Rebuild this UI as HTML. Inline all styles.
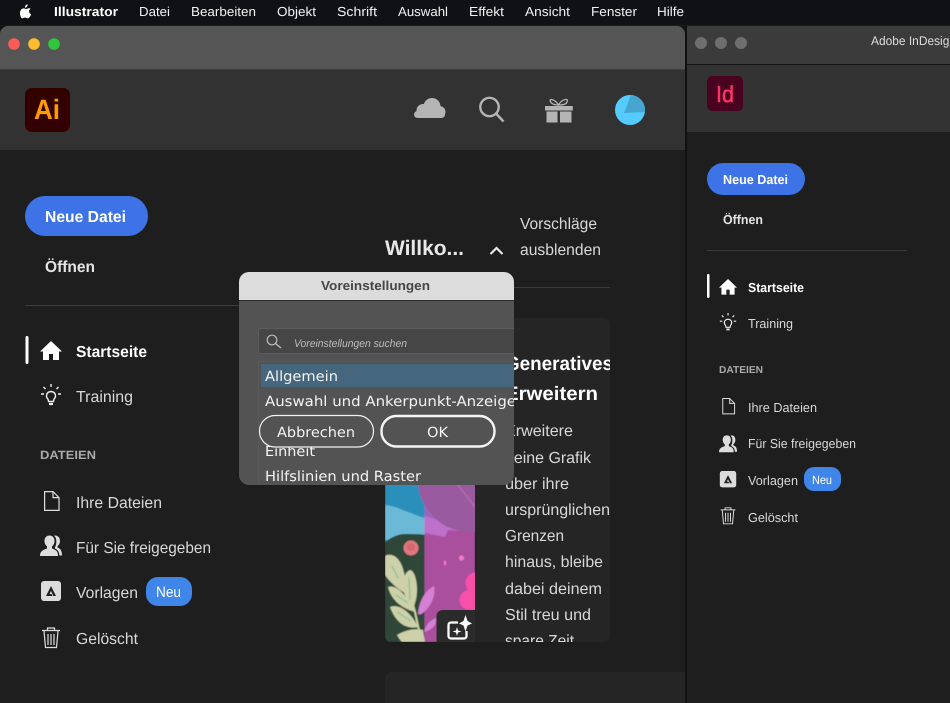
<!DOCTYPE html>
<html lang="de"><head><meta charset="utf-8"><title>Illustrator</title>
<style>
html,body{margin:0;padding:0;background:#1e1e1e;width:950px;height:703px;overflow:hidden}
svg{display:block}
text{font-family:"Liberation Sans",sans-serif;fill:#d8d8d8;text-rendering:geometricPrecision}
.m{font-size:13px;fill:#f2f2f2}
.b{font-weight:700;fill:#fff}
.n{font-size:16px}
.s{font-size:13px}
.d{font-family:"DejaVu Sans",sans-serif;font-size:14px;fill:#f4f4f4}
</style></head><body>
<svg width="950" height="703" viewBox="0 0 950 703" xmlns="http://www.w3.org/2000/svg">
<defs>
<filter id="sf" x="0" y="0" width="100%" height="100%"><feGaussianBlur stdDeviation=".4"/></filter>
<clipPath id="aw"><path d="M0 34a8 8 0 0 1 8-8H677a8 8 0 0 1 8 8V703H0Z"/></clipPath>
<clipPath id="cd"><rect x="385" y="318" width="225" height="324" rx="6"/></clipPath>
<clipPath id="im"><path d="M385 480H475V642H391a6 6 0 0 1-6-6Z"/></clipPath>
<clipPath id="dl"><rect x="239" y="272" width="275" height="213" rx="10"/></clipPath>
<g id="i-home"><path d="M11 0L0 10.500H3V19H9V13H13V19H19V10.500H22Z" fill="#fff"/></g>
<g id="i-bulb" fill="none" stroke="#eee" stroke-width="1.400"><path d="M7.500 14.500C5.800 12.500 6 8 11 7.500C16 8 16.200 12.500 14.500 14.500C13.600 15.500 13.600 16.500 13.500 17.500H8.500C8.400 16.500 8.400 15.500 7.500 14.500Z"/><path d="M9 20H13" stroke-width="2.200"/><path d="M11 0V3M3.500 3L5.500 5M18.500 3L16.500 5M1 10H4M18 10H21"/></g>
<g id="i-file" fill="none" stroke="#ddd" stroke-width="1.200"><path d="M4.600 .6H13L19 6.600V19.400H4.600Z"/><path d="M13 .6V6.600H19"/></g>
<g id="i-ppl" fill="#ddd"><path d="M0 21C0 16 3 15 7 13.500V11.500C5.200 10 4.500 8 4.500 6C4.500 2.500 6.500 .5 9.500 .5S14.500 2.500 14.500 6C14.500 8 13.800 10 12 11.500V13.500C16 15 18 16 18 21Z"/><path d="M15 .5C18 .5 20 2.500 20 6C20 8 19.200 10 17.500 11.200V12.500C20 13.500 22 15 22 20.500H19.500C19.200 16 17 14.500 15 13.500V12C16.200 10.500 16.300 8 16.300 6C16.300 4 15.700 2 14 .8Z"/></g>
<g id="i-tpl"><rect x="1" y="0" width="20" height="20" rx="3" fill="#dcdcdc"/><path d="M11 5L16 15H13.300L11 10L9.500 13H11.500L12.500 15H6Z" fill="#222"/></g>
<g id="i-trash" fill="none" stroke="#ddd" stroke-width="1.200"><path d="M2 3.500H20"/><path d="M7.500 3.500V1H14.500V3.500"/><path d="M4 4L5.500 20.500H16.500L18 4"/><path d="M8 7V18M11 7V18M14 7V18"/></g>
</defs>

<rect width="950" height="703" fill="#1e1e1e"/>
<rect x="0" y="26" width="950" height="677" fill="#111"/>

<!-- InDesign window -->
<path d="M687 26H950V703H687Z" fill="#1e1e1e"/>
<rect x="687" y="26" width="263" height="38" fill="#3b3b3b"/>
<rect x="687" y="64" width="263" height="1" fill="#161616"/>
<rect x="687" y="65" width="263" height="67" fill="#333"/>
<circle cx="701" cy="43" r="6" fill="#6e6e6e"/><circle cx="721" cy="43" r="6" fill="#6e6e6e"/><circle cx="741" cy="43" r="6" fill="#6e6e6e"/>
<text x="871" y="45" style="font-size:12.500px;fill:#ddd" textLength="85" lengthAdjust="spacingAndGlyphs">Adobe InDesign</text>
<rect x="707" y="76" width="36" height="35" rx="5" fill="#49021f"/>
<text x="716" y="102" style="font-size:23px;fill:#ff3366;stroke:#ff3366;stroke-width:.5px" textLength="18" lengthAdjust="spacingAndGlyphs">Id</text>
<rect x="707" y="163" width="98" height="32" rx="16" fill="#3d73e6"/>
<text x="723" y="184" class="b s" textLength="65" lengthAdjust="spacingAndGlyphs">Neue Datei</text>
<text x="723" y="224" class="b s" style="fill:#e4e4e4" textLength="40" lengthAdjust="spacingAndGlyphs">Öffnen</text>
<rect x="707" y="250" width="200" height="1" fill="#3a3a3a"/>
<rect x="707" y="274" width="2.500" height="24" rx="1.200" fill="#fff"/>
<use href="#i-home" transform="translate(719 279) scale(.82)"/>
<text x="748" y="292" class="b s" textLength="56" lengthAdjust="spacingAndGlyphs">Startseite</text>
<use href="#i-bulb" transform="translate(719 313) scale(.82)"/>
<text x="748" y="328" class="s" textLength="45" lengthAdjust="spacingAndGlyphs">Training</text>
<text x="719" y="373" class="b" style="font-size:10px;fill:#aaa" textLength="44" lengthAdjust="spacingAndGlyphs">DATEIEN</text>
<use href="#i-file" transform="translate(719 398) scale(.82)"/>
<text x="748" y="412" class="s" textLength="69" lengthAdjust="spacingAndGlyphs">Ihre Dateien</text>
<use href="#i-ppl" transform="translate(719 435) scale(.82)"/>
<text x="748" y="448" class="s" textLength="108" lengthAdjust="spacingAndGlyphs">Für Sie freigegeben</text>
<use href="#i-tpl" transform="translate(719 471) scale(.82)"/>
<text x="748" y="485" class="s" textLength="50" lengthAdjust="spacingAndGlyphs">Vorlagen</text>
<rect x="804" y="467" width="37" height="24" rx="10" fill="#3f86e8"/>
<text x="812" y="484" class="s" style="fill:#fff;font-size:12px" textLength="20" lengthAdjust="spacingAndGlyphs">Neu</text>
<use href="#i-trash" transform="translate(719 507) scale(.82)"/>
<text x="748" y="522" class="s" textLength="50" lengthAdjust="spacingAndGlyphs">Gelöscht</text>

<!-- Illustrator window -->
<g clip-path="url(#aw)">
<rect x="0" y="26" width="685" height="677" fill="#1e1e1e"/>
<rect x="0" y="26" width="685" height="43" fill="#555"/>
<rect x="0" y="69" width="685" height="1" fill="#3e3e3e"/>
<rect x="0" y="70" width="685" height="80" fill="#323232"/>
<circle cx="14" cy="44" r="5.800" fill="#fc5b57"/><circle cx="34" cy="44" r="5.800" fill="#fcbc2e"/><circle cx="54" cy="44" r="5.800" fill="#2fc63e"/>
<rect x="25" y="88" width="45" height="44" rx="7" fill="#330000"/>
<text x="34" y="119" class="b" style="font-size:28px;fill:#ff9a00" textLength="26" lengthAdjust="spacingAndGlyphs">Ai</text>
<!-- cloud -->
<g fill="#b4b4b4"><rect x="414" y="111" width="31" height="7" rx="3.500"/><circle cx="432" cy="106.500" r="8.500"/><circle cx="423" cy="110.500" r="6.500"/><circle cx="439.500" cy="112" r="6"/></g>
<!-- search -->
<circle cx="489.500" cy="107" r="9.200" fill="none" stroke="#b4b4b4" stroke-width="2.400"/>
<path d="M496.500 114L503.500 121.500" stroke="#b4b4b4" stroke-width="2.400" fill="none"/>
<!-- gift -->
<path d="M545 106H572.800V110.500H545ZM546.500 111.500H557.500V122.500H546.500ZM560 111.500H571.500V122.500H560Z" fill="#b4b4b4"/>
<path d="M558.500 105C555 99 547.500 97.500 551 102.500C552.500 104.500 555 105 558.500 105C563 105 566 104.500 567 102C569 97.500 562 99 558.500 105Z" fill="none" stroke="#b4b4b4" stroke-width="1.300"/>
<!-- avatar -->
<circle cx="630" cy="110" r="15" fill="#55ccff"/>
<path d="M624 113L631 95A15 15 0 0 1 644.900 112Z" fill="#46a6cf"/>

<!-- left sidebar -->
<rect x="25" y="196" width="123" height="40" rx="20" fill="#3d73e6"/>
<text x="45" y="222" class="b n" textLength="81" lengthAdjust="spacingAndGlyphs">Neue Datei</text>
<text x="45" y="272" class="b n" style="fill:#e4e4e4" textLength="50" lengthAdjust="spacingAndGlyphs">Öffnen</text>
<rect x="25" y="305" width="225" height="1" fill="#3a3a3a"/>
<rect x="25.500" y="336" width="3" height="28" rx="1.500" fill="#fff"/>
<use href="#i-home" transform="translate(40 341)"/>
<text x="76" y="357" class="b n" textLength="71" lengthAdjust="spacingAndGlyphs">Startseite</text>
<use href="#i-bulb" transform="translate(40 384)"/>
<text x="76" y="402" class="n" textLength="57" lengthAdjust="spacingAndGlyphs">Training</text>
<text x="40" y="459" class="b" style="font-size:12px;fill:#aaa" textLength="56" lengthAdjust="spacingAndGlyphs">DATEIEN</text>
<use href="#i-file" transform="translate(40 491)"/>
<text x="76" y="508" class="n" textLength="86" lengthAdjust="spacingAndGlyphs">Ihre Dateien</text>
<use href="#i-ppl" transform="translate(40 535)"/>
<text x="76" y="553" class="n" textLength="135" lengthAdjust="spacingAndGlyphs">Für Sie freigegeben</text>
<use href="#i-tpl" transform="translate(40 581)"/>
<text x="76" y="598" class="n" textLength="62" lengthAdjust="spacingAndGlyphs">Vorlagen</text>
<rect x="146" y="577" width="46" height="29" rx="12" fill="#3f86e8"/>
<text x="156" y="597" class="n" style="fill:#fff;font-size:15px" textLength="25" lengthAdjust="spacingAndGlyphs">Neu</text>
<use href="#i-trash" transform="translate(40 627)"/>
<text x="76" y="644" class="n" textLength="62" lengthAdjust="spacingAndGlyphs">Gelöscht</text>

<!-- main content -->
<text x="385" y="255" class="b" style="font-size:21px;fill:#e8e8e8" textLength="79" lengthAdjust="spacingAndGlyphs">Willko...</text>
<path d="M490.500 254L496.500 248L502.500 254" fill="none" stroke="#e8e8e8" stroke-width="2.200"/>
<text x="520" y="229" class="n" textLength="77" lengthAdjust="spacingAndGlyphs">Vorschläge</text>
<text x="520" y="255" class="n" textLength="81" lengthAdjust="spacingAndGlyphs">ausblenden</text>
<rect x="385" y="287" width="225" height="1" fill="#3a3a3a"/>
<rect x="385" y="318" width="225" height="324" rx="6" fill="#252525"/>
<g clip-path="url(#cd)">
<text x="505" y="370" class="b" style="font-size:19.500px" textLength="108" lengthAdjust="spacingAndGlyphs">Generatives</text>
<text x="505" y="400" class="b" style="font-size:19.500px" textLength="93" lengthAdjust="spacingAndGlyphs">Erweitern</text>
<text x="505" y="436" class="n" textLength="68" lengthAdjust="spacingAndGlyphs">Erweitere</text>
<text x="505" y="463" class="n" textLength="86" lengthAdjust="spacingAndGlyphs">deine Grafik</text>
<text x="505" y="489" class="n" textLength="64" lengthAdjust="spacingAndGlyphs">über ihre</text>
<text x="505" y="515" class="n" textLength="105" lengthAdjust="spacingAndGlyphs">ursprünglichen</text>
<text x="505" y="541" class="n" textLength="59" lengthAdjust="spacingAndGlyphs">Grenzen</text>
<text x="505" y="567" class="n" textLength="98" lengthAdjust="spacingAndGlyphs">hinaus, bleibe</text>
<text x="505" y="594" class="n" textLength="97" lengthAdjust="spacingAndGlyphs">dabei deinem</text>
<text x="505" y="620" class="n" textLength="86" lengthAdjust="spacingAndGlyphs">Stil treu und</text>
<text x="505" y="646" class="n" textLength="69" lengthAdjust="spacingAndGlyphs">spare Zeit</text>
</g>
<!-- illustration -->
<g clip-path="url(#im)">
<g filter="url(#sf)">
<rect x="385" y="480" width="40" height="162" fill="#2b8fbb"/>
<path d="M385 505C395 506 402 510 408 512C414 514 420 517 425 518V540H385Z" fill="#6bb9d6"/>
<path d="M385 542C392 537 398 534 405 534C412 534 420 534 425 535V642H385Z" fill="#2e4639"/>
<rect x="424.500" y="480" width="50.500" height="162" fill="#a94f9e"/>
<path d="M424.500 505H475V532L448 530L445 537L424.500 533Z" fill="#bf70ca"/>
<circle cx="470" cy="480" r="52" fill="#9a5a9f"/>
<path d="M424.500 505C428 512 432 516 438 520L424.500 516Z" fill="#9a66c0"/>
<path d="M458 485L475 507" stroke="#b26aa8" stroke-width="1.800" fill="none"/>
<circle cx="411" cy="548" r="7.500" fill="#e0777f"/><circle cx="411" cy="547" r="4" fill="#d66670"/>
<circle cx="461.500" cy="558" r="2.600" fill="#ef7ec6"/><ellipse cx="445" cy="563" rx="1.200" ry="2.500" fill="#ef7ec6"/>
<circle cx="476" cy="583" r="10.500" fill="#f850a8"/><circle cx="469.500" cy="600" r="10" fill="#f850a8"/><rect x="468" y="590" width="8" height="20" fill="#f850a8"/>
<!-- pink leaves -->
<path d="M418 614C419 600 426 590 434 586C436 596 431 606 424 612C422 614 420 615 418 614Z" fill="#d480d4"/>
<path d="M424 632C425 626 430 620 436 618C437 625 432 630 424 632Z" fill="#d480d4"/>
<!-- green leaves -->
<g fill="#cdd0a8">
<path d="M385 556C392 552 399 558 402 566C405 574 407 585 405 593C397 589 389 581 385 575Z"/>
<path d="M410 570C415 571 417 582 417 590C417 598 415 604 413 608C409 604 404 596 403 588C402 580 405 572 410 570Z"/>
<path d="M388 587C396 584 406 594 415 612C405 609 392 603 388 587Z"/>
<path d="M390 607C400 603 412 614 418 627C409 629 397 626 390 607Z"/>
<path d="M397 635C405 630 415 628 423 630L425 642H402C400 640 398 637 397 635Z"/>
</g>
<path d="M409 590L415 612L421 640" stroke="#cdd0a8" stroke-width="2" fill="none"/>
<path d="M392 566L398 578M409 578L410 600M396 595L408 603M397 612L411 621" stroke="#6fbf90" stroke-width="1" fill="none"/>
</g>
<path d="M436.500 616a6 6 0 0 1 6-6H476V643H436.500Z" fill="#2b2b2b"/>
<path d="M458 622.500H451a2.500 2.500 0 0 0-2.500 2.500V636a2.500 2.500 0 0 0 2.500 2.500H464a2.500 2.500 0 0 0 2.500-2.500V631" fill="none" stroke="#fff" stroke-width="2.300"/>
<path d="M465.500 615L467.500 621L472 623.500L467.500 625.500L465.500 631.500L463.500 625.500L459 623.500L463.500 621Z" fill="#fff"/>
<path d="M457 627L458 630.500L461.500 631.500L458 632.500L457 636L456 632.500L452.500 631.500L456 630.500Z" fill="#fff"/>
</g>
<rect x="385" y="672" width="310" height="40" rx="6" fill="#252525"/>
</g>

<!-- dialog -->
<rect x="239" y="272" width="275" height="213" rx="10" fill="#535353"/>
<g clip-path="url(#dl)">
<rect x="239" y="272" width="275" height="28" fill="#dcdcdc"/>
<rect x="239" y="300" width="275" height="1" fill="#2d2d2d"/>
<text x="321" y="290" class="b" style="font-size:13px;fill:#454545" textLength="109" lengthAdjust="spacingAndGlyphs">Voreinstellungen</text>
<rect x="258.500" y="328.500" width="270" height="25" rx="2" fill="#464646" stroke="#5c5c5c"/>
<circle cx="272" cy="340" r="4.800" fill="none" stroke="#bbb" stroke-width="1.200"/>
<path d="M275.500 343.500L281 348" stroke="#bbb" stroke-width="1.400" fill="none"/>
<text x="294" y="347" style="font-size:11px;font-style:italic;fill:#bdbdbd" textLength="113" lengthAdjust="spacingAndGlyphs">Voreinstellungen suchen</text>
<rect x="258.500" y="361.500" width="270" height="130" fill="none" stroke="#5a5a5a"/>
<rect x="261" y="364" width="253" height="23" fill="#46667e"/>
<text x="265" y="381" class="d" textLength="73" lengthAdjust="spacingAndGlyphs">Allgemein</text>
<text x="265" y="406" class="d" textLength="251" lengthAdjust="spacingAndGlyphs">Auswahl und Ankerpunkt-Anzeige</text>
<text x="265" y="456" class="d" textLength="50" lengthAdjust="spacingAndGlyphs">Einheit</text>
<text x="265" y="481" class="d" textLength="156" lengthAdjust="spacingAndGlyphs">Hilfslinien und Raster</text>
<rect x="259.500" y="415.500" width="114" height="31.500" rx="15.700" fill="#535353" stroke="#f2f2f2" stroke-width="1.200"/>
<text x="277" y="437" class="d" textLength="78" lengthAdjust="spacingAndGlyphs">Abbrechen</text>
<rect x="381.500" y="416" width="113" height="30.500" rx="15" fill="#535353" stroke="#f5f5f5" stroke-width="2.400"/>
<text x="427" y="437" class="d" textLength="21" lengthAdjust="spacingAndGlyphs">OK</text>
</g>

<!-- menu bar -->
<rect x="0" y="0" width="950" height="25" fill="#101114"/>
<rect x="0" y="25" width="950" height="1" fill="#1c1c1e"/>
<path d="M27.500 4.300C28 6 26.500 7.700 25 7.800C24.700 6 26.200 4.500 27.500 4.300ZM30.500 8.700C28.300 10 28.700 13.300 31.300 14.300C30.400 16.500 29 18.300 27.700 18.300C26.600 18.300 26.300 17.600 25 17.600C23.700 17.600 23.200 18.300 22.300 18.300C20.700 18.300 20 15 20 13C20 10 22 8.400 23.800 8.400C25 8.400 25.600 9.100 26.400 9.100C27.200 9.100 27.800 8.300 29 8.300C29.600 8.300 30.200 8.400 30.500 8.700Z" fill="#fff"/>
<text x="54" y="16" class="m b" textLength="64" lengthAdjust="spacingAndGlyphs">Illustrator</text>
<text x="139" y="16" class="m" textLength="31" lengthAdjust="spacingAndGlyphs">Datei</text>
<text x="191" y="16" class="m" textLength="65" lengthAdjust="spacingAndGlyphs">Bearbeiten</text>
<text x="277" y="16" class="m" textLength="39" lengthAdjust="spacingAndGlyphs">Objekt</text>
<text x="337" y="16" class="m" textLength="40" lengthAdjust="spacingAndGlyphs">Schrift</text>
<text x="398" y="16" class="m" textLength="50" lengthAdjust="spacingAndGlyphs">Auswahl</text>
<text x="469" y="16" class="m" textLength="35" lengthAdjust="spacingAndGlyphs">Effekt</text>
<text x="525" y="16" class="m" textLength="45" lengthAdjust="spacingAndGlyphs">Ansicht</text>
<text x="591" y="16" class="m" textLength="46" lengthAdjust="spacingAndGlyphs">Fenster</text>
<text x="657" y="16" class="m" textLength="27" lengthAdjust="spacingAndGlyphs">Hilfe</text>
</svg>
</body></html>
